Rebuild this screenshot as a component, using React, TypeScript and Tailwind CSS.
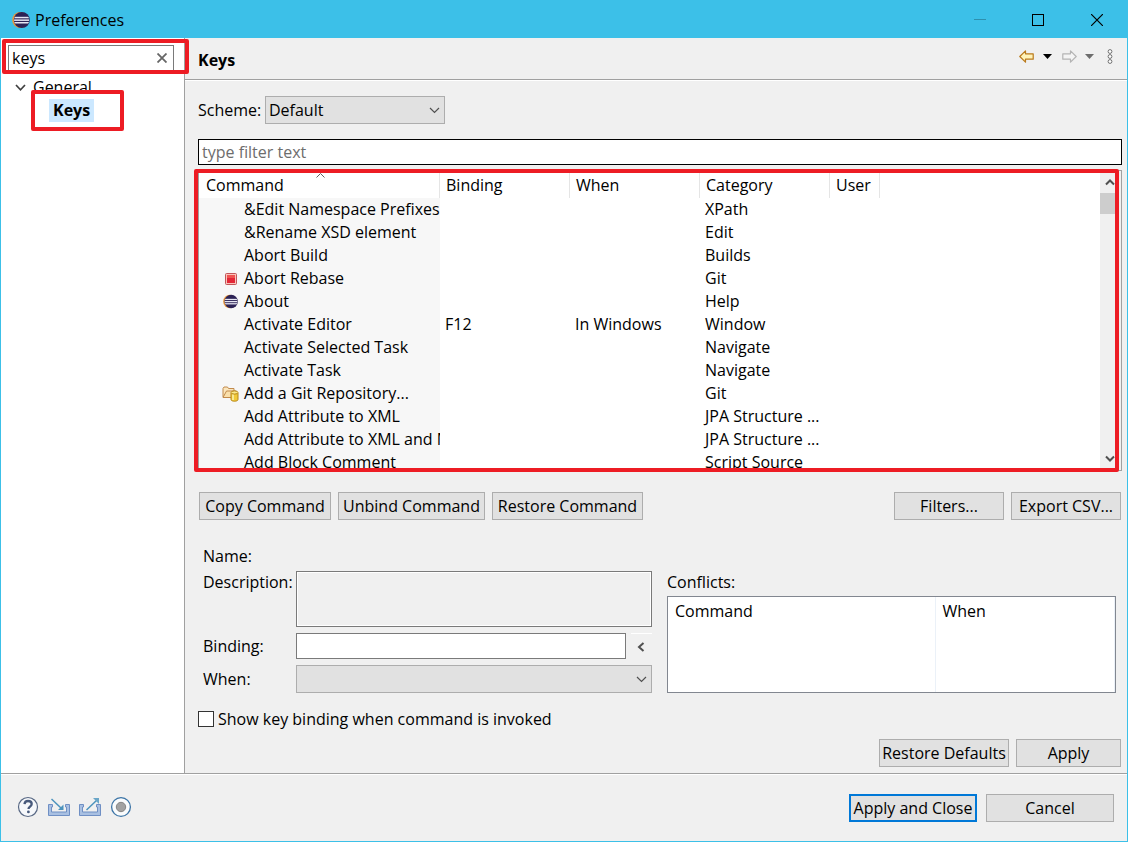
import { useId, useState } from "react";
import type { ReactNode } from "react";

const BUTTON = "h-7 border border-[#adadad] bg-[#e1e1e1] whitespace-nowrap text-center leading-6";

type Command = {
  name: string;
  category: string;
  binding?: string;
  when?: string;
  icon?: ReactNode;
};

function EclipseIcon({ size }: { size: number }) {
  const clip = useId();
  return (
    <svg width={size} height={size} viewBox="0 0 18 18" aria-hidden="true">
      <defs>
        <clipPath id={clip}>
          <circle cx="9.6" cy="9" r="7.6" />
        </clipPath>
      </defs>
      <circle cx="8.2" cy="9" r="8" fill="#e8963a" />
      <circle cx="9.8" cy="9" r="8" fill="#2c2255" />
      <g clipPath={`url(#${clip})`} fill="#e6e6f2">
        <rect x="1" y="5.8" width="17" height="1.5" />
        <rect x="1" y="8.4" width="17" height="1.5" />
        <rect x="1" y="11" width="17" height="1.5" />
      </g>
    </svg>
  );
}

function StopIcon() {
  return (
    <svg width="12" height="12" viewBox="0 0 12 12" aria-hidden="true">
      <rect x="0.5" y="0.5" width="11" height="11" rx="1" fill="#f9c4bb" stroke="#c2565a" />
      <rect x="2" y="2" width="8" height="8" fill="#e32636" />
      <rect x="2" y="2" width="8" height="3" fill="#ef5350" />
    </svg>
  );
}

function RepositoryIcon() {
  return (
    <svg width="17" height="16" viewBox="0 0 17 16" aria-hidden="true">
      <path d="M1 11V2.500L2 1h3.500l1 1.500H12V5" fill="#fbe6bd" stroke="#c28a4c" />
      <path d="M1 11.500 4.500 5H14l-3 6.500Z" fill="#fae0ac" stroke="#c28a4c" />
      <path d="M9 7v6.500c0 2.300 7 2.300 7 0V7Z" fill="#f0c93a" stroke="#b88716" />
      <path d="M11 8v6" stroke="#fdf3b4" strokeWidth="1.500" />
      <ellipse cx="12.500" cy="6.500" rx="3.500" ry="1.600" fill="#fbe98a" stroke="#b88716" />
    </svg>
  );
}

function Chevron({ className }: { className: string }) {
  return (
    <svg className={className} width="11" height="7" viewBox="0 0 11 7" fill="none" aria-hidden="true">
      <path d="m1 1 4.500 4.500L10 1" stroke="currentColor" strokeWidth="1.200" />
    </svg>
  );
}

function BoldChevron({ up = false }: { up?: boolean }) {
  return (
    <svg width="10" height="8" viewBox="0 0 10 8" fill="none" aria-hidden="true">
      <path d={up ? "M1 6.500 5 2.500l4 4" : "m1 1.500 4 4 4-4"} stroke="#505050" strokeWidth="2" />
    </svg>
  );
}

const COMMANDS: Command[] = [
  { name: "&Edit Namespace Prefixes", category: "XPath" },
  { name: "&Rename XSD element", category: "Edit" },
  { name: "Abort Build", category: "Builds" },
  { name: "Abort Rebase", category: "Git", icon: <StopIcon /> },
  { name: "About", category: "Help", icon: <EclipseIcon size={15} /> },
  { name: "Activate Editor", category: "Window", binding: "F12", when: "In Windows" },
  { name: "Activate Selected Task", category: "Navigate" },
  { name: "Activate Task", category: "Navigate" },
  { name: "Add a Git Repository...", category: "Git", icon: <RepositoryIcon /> },
  { name: "Add Attribute to XML", category: "JPA Structure ..." },
  { name: "Add Attribute to XML and Map", category: "JPA Structure ..." },
  { name: "Add Block Comment", category: "Script Source" },
];

function TitleBar() {
  return (
    <header className="flex h-[37px] shrink-0 items-center bg-[#3cc0e8] pl-[11px]">
      <EclipseIcon size={18} />
      <h1 className="ml-[5px] flex-1">Preferences</h1>
      <button aria-label="Minimize" className="flex h-full w-[59px] items-center justify-center text-[#2d90ae]">
        <svg width="12" height="12" viewBox="0 0 12 12"><path d="M0 5.500h12" stroke="currentColor" /></svg>
      </button>
      <button aria-label="Maximize" className="flex h-full w-[58px] items-center justify-center">
        <svg width="12" height="12" viewBox="0 0 12 12" fill="none"><rect x="0.5" y="0.5" width="11" height="11" stroke="#000" /></svg>
      </button>
      <button aria-label="Close" className="flex h-full w-[60px] items-center justify-center">
        <svg width="12" height="12" viewBox="0 0 12 12" fill="none"><path d="m0 0 12 12M12 0 0 12" stroke="#000" strokeWidth="1.200" /></svg>
      </button>
    </header>
  );
}

function Sidebar() {
  const [query, setQuery] = useState("keys");
  return (
    <aside className="relative w-[184px] shrink-0 border-r border-[#a0a0a0] bg-white">
      <div className="mt-[7px] mr-[10px] ml-[7px] flex h-[26px] items-center border border-[#7a7a7a] pl-[3px]">
        <input
          aria-label="Filter pages"
          value={query}
          onChange={(e) => setQuery(e.target.value)}
          className="min-w-0 flex-1 outline-none"
        />
        <button aria-label="Clear" className="flex h-full w-[23px] items-center justify-center" onClick={() => setQuery("")}>
          <svg width="10" height="10" viewBox="0 0 10 10"><path d="m.5.5 9 9m0-9-9 9" stroke="#666" strokeWidth="1.800" /></svg>
        </button>
      </div>
      <ul className="mt-[5px] leading-[23px]">
        <li>
          <div className="flex items-center pl-[14px]">
            <svg width="11" height="8" viewBox="0 0 11 8" fill="none" aria-hidden="true"><path d="m1 1 4.500 4.800L10 1" stroke="#404040" strokeWidth="1.700" /></svg>
            <span className="ml-[7px]">General</span>
          </div>
          <ul className="pl-12">
            <li className="w-fit bg-[#cce8ff] px-1 font-bold">Keys</li>
          </ul>
        </li>
      </ul>
      <div className="pointer-events-none absolute top-px -right-[5px] left-px z-10 h-[35px] rounded-xs border-4 border-[#ed1c24]" />
      <div className="pointer-events-none absolute top-[52px] left-[30px] z-10 h-[41px] w-[93px] rounded-xs border-4 border-[#ed1c24]" />
    </aside>
  );
}

function PageHeader() {
  return (
    <div className="flex h-[42px] items-center border-b border-[#a0a0a0] pr-[14px] pl-[13px] shadow-[0_1px_0_#fff]">
      <h2 className="flex-1 pt-[2px] font-bold">Keys</h2>
      <div className="flex items-center pb-[5px]">
        <button aria-label="Back">
          <svg width="15" height="13" viewBox="0 0 15 13"><path d="M.8 6.500 6.500.8v3H14.200v5.400H6.500v3Z" fill="#fff3b8" stroke="#b97a1c" strokeWidth="1.200" strokeLinejoin="round" /></svg>
        </button>
        <button aria-label="Back history" className="ml-[9px]">
          <svg width="9" height="5" viewBox="0 0 9 5"><path d="M0 0h9L4.500 5Z" /></svg>
        </button>
        <button aria-label="Forward" className="ml-[10px]">
          <svg width="15" height="13" viewBox="0 0 15 13"><path d="M14.200 6.500 8.500.8v3H.8v5.400h7.700v3Z" fill="#f4f4f4" stroke="#b4b4b4" strokeWidth="1.200" strokeLinejoin="round" /></svg>
        </button>
        <button aria-label="Forward history" className="ml-2">
          <svg width="9" height="5" viewBox="0 0 9 5"><path d="M0 0h9L4.500 5Z" fill="#6d6d6d" /></svg>
        </button>
        <button aria-label="View menu" className="ml-[13px]">
          <svg width="6" height="15" viewBox="0 0 6 15" fill="#fff" stroke="#707070"><circle cx="3" cy="2.500" r="1.900" /><circle cx="3" cy="7.500" r="1.900" /><circle cx="3" cy="12.500" r="1.900" /></svg>
        </button>
      </div>
    </div>
  );
}

function CommandTable() {
  const head = "relative h-[27px] border-r border-[#e5e5e5] pt-[2px] pl-[6px] text-left font-normal";
  return (
    <div className="relative mt-[5px]">
      <div className="flex h-[301px] overflow-hidden border border-[#a0a0a0] bg-white">
        <div className="min-w-0 flex-1 overflow-hidden">
          <table className="w-full table-fixed border-separate border-spacing-0 leading-[23px]">
            <colgroup>
              <col className="w-[241px]" />
              <col className="w-[130px]" />
              <col className="w-[130px]" />
              <col className="w-[130px]" />
              <col className="w-[50px]" />
              <col />
            </colgroup>
            <thead>
              <tr>
                <th className={head}>
                  <span className="pl-px">Command</span>
                  <svg className="absolute top-[2px] left-[117px]" width="9" height="5" viewBox="0 0 9 5" fill="none" aria-hidden="true"><path d="m.5 4.500 4-4 4 4" stroke="#606060" /></svg>
                </th>
                <th className={head}>Binding</th>
                <th className={head}>When</th>
                <th className={head}>Category</th>
                <th className={head}>User</th>
                <td />
              </tr>
            </thead>
            <tbody>
              {COMMANDS.map((c) => (
                <tr key={c.name} className="whitespace-nowrap">
                  <td className="overflow-hidden bg-[#f7f7f7] p-0">
                    <div className="flex h-[23px] items-center">
                      <span className="ml-[23px] flex w-[22px] shrink-0 justify-center pr-[5px]">{c.icon}</span>
                      <span>{c.name}</span>
                    </div>
                  </td>
                  <td className="p-0 pl-[5px]">{c.binding}</td>
                  <td className="p-0 pl-[5px]">{c.when}</td>
                  <td className="p-0 pl-[5px]">{c.category}</td>
                  <td />
                  <td />
                </tr>
              ))}
            </tbody>
          </table>
        </div>
        <div className="flex w-[21px] flex-col items-center bg-[#f0f0f0] py-[7px] pr-[2px]">
          <BoldChevron up />
          <div className="mt-[7px] h-[21px] w-full bg-[#cdcdcd]" />
          <div className="flex-1" />
          <BoldChevron />
        </div>
      </div>
      <div className="pointer-events-none absolute -top-px right-[3px] -bottom-px -left-1 rounded-xs border-4 border-[#ed1c24]" />
    </div>
  );
}

function BindingForm() {
  return (
    <div className="mt-[25px] flex pr-[6px] pl-[5px]">
      <div className="grid flex-[449] grid-cols-[93px_1fr]">
        <span className="h-[26px] leading-[23px]">Name:</span>
        <span />
        <label htmlFor="description" className="leading-[22px]">Description:</label>
        <textarea id="description" readOnly className="block h-14 resize-none border border-[#7a7a7a] bg-[#f0f0f0] shadow-[inset_0_0_0_1px_#fff]" />
        <label htmlFor="binding" className="mt-[6px] leading-[26px]">Binding:</label>
        <div className="mt-[6px] flex">
          <input id="binding" className="h-[26px] min-w-0 flex-1 border border-[#7a7a7a] bg-white px-1" />
          <button aria-label="Insert key" className="ml-[5px] flex w-[21px] items-center justify-center border-t border-white pr-[2px]">
            <svg width="8" height="10" viewBox="0 0 8 10" fill="none"><path d="M6.500 1 2 5l4.500 4" stroke="#505050" strokeWidth="2" /></svg>
          </button>
        </div>
        <label htmlFor="when" className="mt-[6px] leading-7">When:</label>
        <div className="relative mt-[6px]">
          <select id="when" className="block h-7 w-full appearance-none border border-[#adadad] bg-[#e1e1e1]" />
          <Chevron className="pointer-events-none absolute top-[11px] right-[5px] text-[#505050]" />
        </div>
      </div>
      <div className="ml-[15px] flex flex-[449] flex-col pt-[26px]">
        <span className="leading-[22px]">Conflicts:</span>
        <div className="mt-[3px] h-[97px] border border-[#828790] bg-white">
          <table className="h-full w-full table-fixed leading-[23px]">
            <thead>
              <tr>
                <th className="w-[60%] border-r border-[#ebf1f8] pt-[3px] pl-[7px] text-left align-top font-normal">Command</th>
                <th className="border-r border-[#ebf1f8] pt-[3px] pl-[6px] text-left align-top font-normal">When</th>
              </tr>
            </thead>
          </table>
        </div>
      </div>
    </div>
  );
}

function KeysPage() {
  return (
    <main className="min-w-0 flex-1">
      <PageHeader />
      <div className="flex flex-col pt-4 pr-[5px] pb-[6px] pl-[13px]">
        <div className="flex items-center">
          <label htmlFor="scheme" className="w-[67px]">Scheme:</label>
          <div className="relative w-[180px]">
            <select id="scheme" className="block h-7 w-full appearance-none border border-[#adadad] bg-[#e1e1e1] pl-[3px]">
              <option>Default</option>
            </select>
            <Chevron className="pointer-events-none absolute top-[11px] right-[5px] text-[#505050]" />
          </div>
        </div>
        <input
          aria-label="Filter commands"
          placeholder="type filter text"
          className="mt-[15px] h-[26px] border border-black bg-white px-[3px] placeholder:text-[#6d6d6d]"
        />
        <CommandTable />
        <div className="mt-[21px] flex gap-[7px] px-px">
          <button className={`${BUTTON} w-[132px]`}>Copy Command</button>
          <button className={`${BUTTON} w-[147px]`}>Unbind Command</button>
          <button className={`${BUTTON} w-[151px]`}>Restore Command</button>
          <button className={`${BUTTON} ml-auto w-[110px]`}>Filters...</button>
          <button className={`${BUTTON} w-[110px]`}>Export CSV...</button>
        </div>
        <BindingForm />
        <label className="mt-[14px] flex h-[23px] items-center gap-1">
          <input type="checkbox" className="size-4 appearance-none border border-[#333] bg-white checked:bg-[#0078d7]" />
          Show key binding when command is invoked
        </label>
        <div className="mt-[9px] flex justify-end gap-[7px] pr-px">
          <button className={`${BUTTON} w-[130px]`}>Restore Defaults</button>
          <button className={`${BUTTON} w-[105px]`}>Apply</button>
        </div>
      </div>
    </main>
  );
}

function TrayBase() {
  return <path d="M.5 8.500v11h21v-11h-4v2.500h1v5h-15v-5h1v-2.500Z" fill="#a9c0e2" stroke="#6f8fc4" />;
}

function Footer() {
  return (
    <footer className="flex flex-1 items-center border-t border-[#a0a0a0] pr-[13px] pl-4 shadow-[inset_0_1px_0_#fff]">
      <div className="flex items-center gap-[9px] pb-[2px]">
        <button aria-label="Help">
          <svg width="22" height="22" viewBox="0 0 22 22" fill="none"><circle cx="11" cy="11" r="9.500" fill="#f6f8fb" stroke="#586884" strokeWidth="1.200" /><path d="M7.500 8.200c.2-2.300 1.500-3.200 3.500-3.200s3.700 1.100 3.700 3c0 2.500-3.200 2.700-3.200 5" stroke="#485a7c" strokeWidth="2.300" /><circle cx="11.400" cy="15.900" r="1.400" fill="#485a7c" /></svg>
        </button>
        <button aria-label="Import">
          <svg width="22" height="22" viewBox="0 0 22 22" fill="none"><TrayBase /><path d="m3.500 3 10 9.500" stroke="#4c93bd" strokeWidth="1.500" /><path d="M15.500 8.500V14H10Z" fill="#4c93bd" /></svg>
        </button>
        <button aria-label="Export">
          <svg width="22" height="22" viewBox="0 0 22 22" fill="none"><TrayBase /><path d="M7.500 14 18 4" stroke="#4c93bd" strokeWidth="1.500" /><path d="M14 2h6v6Z" fill="#6aa6c8" /></svg>
        </button>
        <button aria-label="Record preferences">
          <svg width="22" height="22" viewBox="0 0 22 22"><circle cx="11" cy="11" r="9.400" fill="#fafcfd" stroke="#3c74a6" strokeWidth="1.300" /><circle cx="11" cy="11" r="4.700" fill="#a2a2a2" stroke="#858585" /></svg>
        </button>
      </div>
      <div className="ml-auto flex gap-[9px]">
        <button className="h-7 w-32 border-2 border-[#0078d7] bg-[#e1e1e1] text-center leading-6 whitespace-nowrap">Apply and Close</button>
        <button className={`${BUTTON} w-32`}>Cancel</button>
      </div>
    </footer>
  );
}

export default function App() {
  return (
    <div className="flex min-h-screen flex-col border border-[#3cc0e8] bg-[#f0f0f0] font-['Open_Sans','Noto_Sans',sans-serif] text-base leading-5 text-black">
      <TitleBar />
      <div className="flex">
        <Sidebar />
        <KeysPage />
      </div>
      <Footer />
    </div>
  );
}
